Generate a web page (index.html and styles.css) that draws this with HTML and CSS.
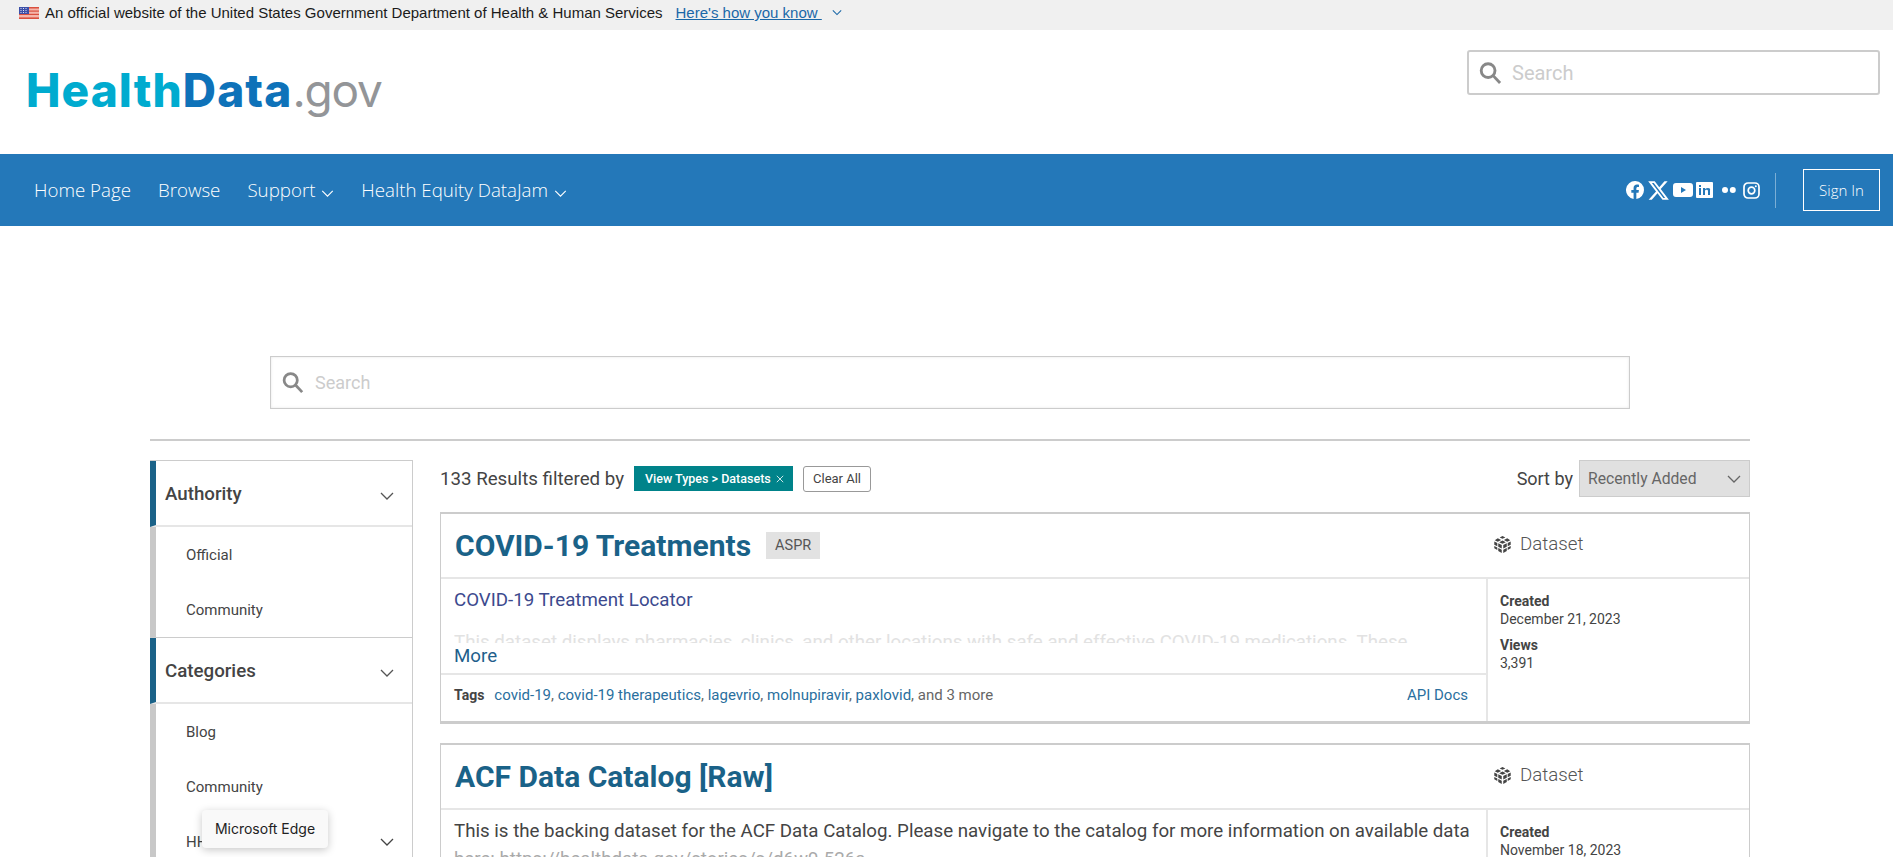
FILE: index.html
```html
<!DOCTYPE html>
<html lang="en">
<head>
  <meta charset="UTF-8">
  <title>HealthData.gov</title>
  <link rel="stylesheet" href="styles.css">
</head>
<body>

  <!-- Government banner -->
  <div class="gov-banner">
    <svg class="flag" viewBox="0 0 20 12" width="20" height="12">
      <rect width="20" height="12" fill="#f4b5ab"/>
      <rect y="0" width="20" height="1.5" fill="#d9503f"/>
      <rect y="3.5" width="20" height="1.2" fill="#d9503f"/>
      <rect y="6.8" width="20" height="1.2" fill="#d9503f"/>
      <rect y="10.4" width="20" height="1.6" fill="#d9503f"/>
      <rect width="10" height="7" fill="#3c4fa8"/>
      <path d="M1.5 1.5h1M4 1.5h1M6.5 1.5h1M1.5 3.5h1M4 3.5h1M6.5 3.5h1M1.5 5.5h1M4 5.5h1M6.5 5.5h1" stroke="#dfe3f5" stroke-width="1"/>
    </svg>
    <span class="gov-text">An official website of the United States Government Department of Health &amp; Human Services</span>
    <a class="gov-link" href="#">Here's how you know&nbsp;</a>
    <svg class="chev gov-chev" viewBox="0 0 12 8" width="10" height="7"><path d="M1 1.5l5 5 5-5"/></svg>
  </div>

  <!-- Logo and search -->
  <header class="site-header">
    <a class="logo" href="#"><span class="logo-health">Health</span><span class="logo-data">Data</span><span class="logo-gov">.gov</span></a>
    <div class="search search-small">
      <svg class="search-icon" viewBox="0 0 24 24" width="23" height="24"><circle cx="9.5" cy="9.5" r="7.2"/><path d="M15 15l7 7.5"/></svg>
      <span>Search</span>
    </div>
  </header>

  <nav class="site-nav">
    <div class="nav-links">
      <a href="#">Home Page</a>
      <a href="#">Browse</a>
      <a href="#">Support <svg class="chev" viewBox="0 0 14 8" width="13" height="7"><path d="M1 1l6 6 6-6"/></svg></a>
      <a href="#">Health Equity DataJam <svg class="chev" viewBox="0 0 14 8" width="13" height="7"><path d="M1 1l6 6 6-6"/></svg></a>
    </div>
    <div class="nav-right">
      <div class="social">
        <svg viewBox="0 0 24 24" width="18" height="18"><path fill="#fff" d="M24 12a12 12 0 1 0-13.9 11.900v-8.400H7.100V12h3V9.400c0-3 1.800-4.700 4.500-4.700 1.300 0 2.700.2 2.700.2v3h-1.500c-1.500 0-2 .9-2 1.900V12h3.400l-.5 3.500h-2.900v8.400A12 12 0 0 0 24 12z"/></svg>
        <svg viewBox="0 0 24 24" width="23" height="23"><path fill="#fff" d="M18.244 2.250h3.308l-7.227 8.260 8.502 11.240H16.170l-5.214-6.817L4.990 21.750H1.680l7.730-8.835L1.254 2.250H8.080l4.713 6.231zm-1.161 17.520h1.833L7.084 4.126H5.117z"/></svg>
        <svg viewBox="0 0 20 14" width="20" height="14"><path fill="#fff" fill-rule="evenodd" d="M3 0h14a3 3 0 0 1 3 3v8a3 3 0 0 1-3 3H3a3 3 0 0 1-3-3V3a3 3 0 0 1 3-3zm5 4v6l5-3z"/></svg>
        <svg viewBox="0 0 18 16" width="18" height="16"><path fill="#fff" fill-rule="evenodd" d="M1 0h15a1 1 0 0 1 1 1v14a1 1 0 0 1-1 1H1a1 1 0 0 1-1-1V1a1 1 0 0 1 1-1zm2 6v7h2V6zm0-3v2h2V3zm4 3v7h2V9c0-1.600 3-1.800 3 0v4h2V8.500C15 5.500 11 5.500 9 7V6z"/></svg>
        <svg class="flickr" viewBox="0 0 14 6" width="14" height="6"><circle cx="3" cy="3" r="3" fill="#fff"/><circle cx="10.800" cy="3" r="3" fill="#fff"/></svg>
        <svg viewBox="0 0 17 17" width="17" height="17"><rect x="1" y="1" width="15" height="15" rx="4" fill="none" stroke="#fff" stroke-width="1.700"/><circle cx="8.500" cy="8.500" r="3.300" fill="none" stroke="#fff" stroke-width="1.700"/><circle cx="12.800" cy="4.200" r="1" fill="#fff"/></svg>
      </div>
      <span class="nav-divider"></span>
      <a class="sign-in" href="#">Sign In</a>
    </div>
  </nav>

  <main class="page">
    <div class="search search-large">
      <svg class="search-icon" viewBox="0 0 24 24" width="22" height="23"><circle cx="9.5" cy="9.5" r="7.2"/><path d="M15 15l7 7.5"/></svg>
      <span>Search</span>
    </div>
    <hr class="rule">

    <div class="columns">
      <aside class="sidebar">
        <section class="facet">
          <div class="facet-head">Authority <svg class="chev" viewBox="0 0 14 8" width="14" height="8"><path d="M1 1l6 6 6-6"/></svg></div>
          <ul class="facet-items">
            <li>Official</li>
            <li>Community</li>
          </ul>
        </section>
        <section class="facet">
          <div class="facet-head">Categories <svg class="chev" viewBox="0 0 14 8" width="14" height="8"><path d="M1 1l6 6 6-6"/></svg></div>
          <ul class="facet-items">
            <li>Blog</li>
            <li>Community</li>
            <li class="has-sub">HHS <svg class="chev" viewBox="0 0 14 8" width="14" height="8"><path d="M1 1l6 6 6-6"/></svg></li>
          </ul>
        </section>
      </aside>

      <div class="results">
        <div class="results-bar">
          <span class="results-count">133 Results filtered by</span>
          <span class="filter-pill">View Types &gt; Datasets <svg viewBox="0 0 10 10" width="8" height="8"><path d="M1 1l8 8M9 1l-8 8"/></svg></span>
          <button class="clear-btn">Clear All</button>
          <div class="sort">
            <span>Sort by</span>
            <div class="sort-select">Recently Added <svg class="chev" viewBox="0 0 14 8" width="14" height="8"><path d="M1 1l6 6 6-6"/></svg></div>
          </div>
        </div>

        <article class="card">
          <div class="card-head">
            <h2>COVID-19 Treatments</h2>
            <span class="agency">ASPR</span>
            <span class="card-type">
              <svg class="cube" viewBox="0 0 18 18" width="17" height="17"><path d="M9 0l3 1.500-3 1.500-3-1.500zM4 2.500l3.500 1.800L4 6 .8 4.500zM14 2.500l3.200 2L14 6l-3.500-1.700zM9 4.800L12.500 6.500 9 8.300 5.500 6.500zM.3 5.800l3.200 1.500v3.600L.3 9.300zM4.500 7.800l3.700 1.700v3.800l-3.700-1.800zM13.500 7.800v3.700l-3.700 1.800V9.500zM17.700 5.800v3.500l-3.200 1.600V7.300zM.3 10.500l3.200 1.600v2.700L.3 13zM4.500 12.800l3.700 1.800V18l-3.700-2zM9.800 14.600l3.700-1.800V16l-3.700 2zM17.700 10.500V13l-3.200 1.800v-2.700z"/></svg>
              Dataset
            </span>
          </div>
          <div class="card-body">
            <div class="card-main">
              <div class="card-desc">
                <a class="desc-title" href="#">COVID-19 Treatment Locator</a>
                <div class="desc-fade">This dataset displays pharmacies, clinics, and other locations with safe and effective COVID-19 medications. These</div>
                <a class="desc-more" href="#">More</a>
              </div>
              <div class="card-foot">
                <div class="tags"><b>Tags</b><span><a href="#">covid-19</a>, <a href="#">covid-19 therapeutics</a>, <a href="#">lagevrio</a>, <a href="#">molnupiravir</a>, <a href="#">paxlovid</a>, and 3 more</span></div>
                <a href="#">API Docs</a>
              </div>
            </div>
            <dl class="card-meta">
              <dt>Created</dt>
              <dd>December 21, 2023</dd>
              <dt>Views</dt>
              <dd>3,391</dd>
            </dl>
          </div>
        </article>

        <article class="card">
          <div class="card-head">
            <h2>ACF Data Catalog [Raw]</h2>
            <span class="card-type">
              <svg class="cube" viewBox="0 0 18 18" width="17" height="17"><path d="M9 0l3 1.500-3 1.500-3-1.500zM4 2.500l3.500 1.800L4 6 .8 4.500zM14 2.500l3.200 2L14 6l-3.500-1.700zM9 4.800L12.500 6.500 9 8.300 5.500 6.500zM.3 5.800l3.200 1.500v3.600L.3 9.300zM4.500 7.800l3.700 1.700v3.800l-3.700-1.800zM13.500 7.800v3.700l-3.700 1.800V9.500zM17.700 5.800v3.500l-3.200 1.600V7.300zM.3 10.500l3.200 1.600v2.700L.3 13zM4.500 12.800l3.700 1.800V18l-3.700-2zM9.800 14.600l3.700-1.800V16l-3.700 2zM17.700 10.500V13l-3.200 1.800v-2.700z"/></svg>
              Dataset
            </span>
          </div>
          <div class="card-body">
            <div class="card-main">
              <div class="card-desc">
                <p class="desc-plain">This is the backing dataset for the ACF Data Catalog. Please navigate to the catalog for more information on available data</p>
                <p class="desc-next">here: https://healthdata.gov/stories/s/d6w9-526a</p>
              </div>
            </div>
            <dl class="card-meta">
              <dt>Created</dt>
              <dd>November 18, 2023</dd>
            </dl>
          </div>
        </article>
      </div>
    </div>
  </main>

  <div class="edge-tip">Microsoft Edge</div>

</body>
</html>
```

FILE: styles.css
```css
* {
  margin: 0;
  padding: 0;
  box-sizing: border-box;
}

html, body {
  height: 857px;
  overflow: hidden;
}

body {
  position: relative;
  font-family: 'Roboto', sans-serif;
  color: #444;
  background: #fff;
}

a {
  color: inherit;
  text-decoration: none;
}

ul {
  list-style: none;
}

.chev {
  fill: none;
  stroke: currentColor;
  stroke-width: 1.3;
}

/* Government banner */
.gov-banner {
  height: 30px;
  padding: 0 0 5px 19px;
  background: #f0f0f0;
  display: flex;
  align-items: center;
  font-family: 'Liberation Sans', Arial, sans-serif;
  font-size: 15px;
  color: #1b1b1b;
}

.flag {
  margin-right: 6px;
}

.gov-link {
  margin-left: 13px;
  color: #1a68a8;
  text-decoration: underline;
}

.gov-chev {
  margin-left: 10px;
  color: #1a68a8;
}

/* Header */
.site-header {
  height: 124px;
  display: flex;
  justify-content: space-between;
  padding: 20px 13px 0 26px;
}

.logo {
  font-family: 'Inter', sans-serif;
  font-weight: 800;
  font-size: 46px;
  line-height: 80px;
  letter-spacing: 1.1px;
  white-space: nowrap;
}

.logo-health {
  color: #00abcf;
}

.logo-data {
  color: #0e72b9;
}

.logo-gov {
  color: #939598;
  font-weight: 400;
  letter-spacing: -1.2px;
}

.search {
  display: flex;
  align-items: center;
  background: #fff;
  border: 2px solid #ccc;
  color: #ccc;
  font-size: 18px;
}

.search-small {
  width: 413px;
  height: 45px;
  padding-left: 10px;
  gap: 10px;
  border-radius: 3px;
  font-size: 20px;
}

.search-large {
  height: 53px;
  margin: 0 120px;
  padding-left: 11px;
  gap: 11px;
  border-width: 1px;
  box-shadow: inset 0 0 3px rgba(0, 0, 0, 0.1);
}

.search-icon {
  fill: none;
  stroke: #888;
  stroke-width: 3;
}

/* Nav bar */
.site-nav {
  height: 72px;
  padding: 0 13px 0 34px;
  background: #2478b9;
  color: #fff;
  display: flex;
  justify-content: space-between;
  align-items: center;
  font-family: 'Open Sans', sans-serif;
  font-weight: 300;
}

.nav-links {
  display: flex;
  gap: 27px;
  padding-bottom: 2px;
  font-size: 18.72px;
}

.nav-links .chev {
  margin-left: 1px;
}

.nav-right {
  display: flex;
  align-items: center;
}

.social {
  display: flex;
  align-items: center;
  gap: 3px;
}

.flickr {
  margin: 0 4px 0 5px;
}

.nav-divider {
  width: 1px;
  height: 35px;
  margin: 0 27px 0 15px;
  background: rgba(255, 255, 255, 0.4);
}

.sign-in {
  width: 77px;
  height: 42px;
  border: 1px solid #fff;
  font-size: 15px;
  display: flex;
  justify-content: center;
  align-items: center;
}

/* Page */
.page {
  width: 1600px;
  margin-left: 150px;
  padding-top: 130px;
}

.rule {
  margin-top: 30px;
  border: 0;
  border-top: 2px solid #ccc;
}

.columns {
  display: flex;
  align-items: flex-start;
  gap: 27px;
  margin-top: 19px;
}

/* Sidebar */
.sidebar {
  width: 263px;
  flex: none;
  border: 1px solid #ccc;
  border-left: 0;
}

.facet + .facet {
  border-top: 1px solid #ccc;
}

.facet-head {
  height: 66px;
  padding: 2px 18px 0 9px;
  border-left: 6px solid #1a6288;
  border-bottom: 2px solid #e6e6e6;
  display: flex;
  justify-content: space-between;
  align-items: center;
  font-size: 18.72px;
  font-weight: 500;
  color: #444;
}

.facet-head .chev {
  color: #555;
  margin-top: 3px;
}

.facet-items {
  border-left: 6px solid #c8c8c8;
  font-size: 15px;
}

.facet-items li {
  height: 55px;
  padding: 0 18px 0 30px;
  display: flex;
  align-items: center;
}

.has-sub {
  justify-content: space-between;
}

/* Results */
.results {
  flex: 1;
  min-width: 0;
}

.results-bar {
  height: 37px;
  display: flex;
  align-items: center;
  font-size: 18px;
}

.results-count {
  margin-right: 10px;
  font-size: 18.72px;
}

.filter-pill {
  height: 25px;
  width: 159px;
  padding: 0 9px 0 11px;
  background: #00838a;
  color: #fff;
  display: flex;
  justify-content: space-between;
  align-items: center;
  font-size: 12.5px;
  font-weight: 500;
  white-space: nowrap;
}

.filter-pill svg {
  fill: none;
  stroke: #fff;
  stroke-width: 1;
}

.clear-btn {
  height: 26px;
  margin-left: 10px;
  padding: 0 9px;
  background: #fff;
  border: 1px solid #999;
  border-radius: 3px;
  color: #444;
  font: 400 13px 'Roboto', sans-serif;
}

.sort {
  margin-left: auto;
  display: flex;
  align-items: center;
  gap: 6px;
}

.sort-select {
  width: 171px;
  height: 37px;
  padding: 0 8px 0 8px;
  background: #e0e0e0;
  border: 1px solid #ccc;
  color: #666;
  display: flex;
  justify-content: space-between;
  align-items: center;
  font-size: 15.7px;
}

/* Cards */
.card {
  margin-top: 15px;
  border: 1px solid #ccc;
  border-top-width: 2px;
  border-bottom-width: 3px;
}

.card + .card {
  margin-top: 19px;
}

.card-head {
  height: 65px;
  padding: 0 0 0 14px;
  display: flex;
  align-items: center;
  border-bottom: 2px solid #e6e6e6;
}

.card-head h2 {
  font-size: 30px;
  font-weight: 700;
  color: #1a6288;
}

.agency {
  margin-left: 15px;
  padding: 0 9px;
  height: 27px;
  background: #e2e2e2;
  color: #555;
  font-size: 14.5px;
  display: flex;
  align-items: center;
}

.card-type {
  margin-left: auto;
  margin-top: -3px;
  width: 255px;
  display: flex;
  align-items: center;
  gap: 9px;
  font-size: 18.72px;
  font-weight: 300;
  color: #555;
}

.cube {
  fill: #444;
}

.card-body {
  display: flex;
}

.card-main {
  flex: 1;
  min-width: 0;
}

.card-desc {
  height: 96px;
  padding: 10px 10px 0 13px;
  font-size: 18.72px;
  line-height: 22px;
  border-bottom: 2px solid #e6e6e6;
}

.desc-title {
  display: block;
  color: #3c4a8e;
}

.desc-fade {
  height: 12px;
  margin-top: 20px;
  overflow: hidden;
  color: #e2e2e2;
  white-space: nowrap;
}

.desc-more {
  display: block;
  margin-top: 2px;
  color: #1f5f8c;
}

.desc-plain {
  white-space: nowrap;
}

.desc-next {
  margin-top: 6px;
  color: #aaa;
}

.card-foot {
  height: 46px;
  padding: 11px 18px 0 13px;
  display: flex;
  justify-content: space-between;
  font-size: 15px;
  color: #666;
}

.card-foot a {
  color: #2a6f9e;
}

.tags b {
  color: #444;
  font-size: 14px;
  font-weight: 700;
  margin-right: 10px;
}

.card-meta {
  width: 263px;
  flex: none;
  padding: 13px 12px;
  border-left: 2px solid #e6e6e6;
  font-size: 14px;
  line-height: 18px;
  color: #444;
}

.card-meta dt {
  font-weight: 700;
}

.card-meta dd {
  margin-bottom: 8px;
}

/* Browser tooltip */
.edge-tip {
  position: absolute;
  left: 202px;
  top: 810px;
  width: 126px;
  height: 38px;
  background: #f9f9f9;
  border-radius: 4px;
  box-shadow: 0 2px 8px rgba(0, 0, 0, 0.22);
  color: #222;
  font-family: 'Inter', sans-serif;
  font-size: 14px;
  line-height: 38px;
  text-align: center;
}
```
